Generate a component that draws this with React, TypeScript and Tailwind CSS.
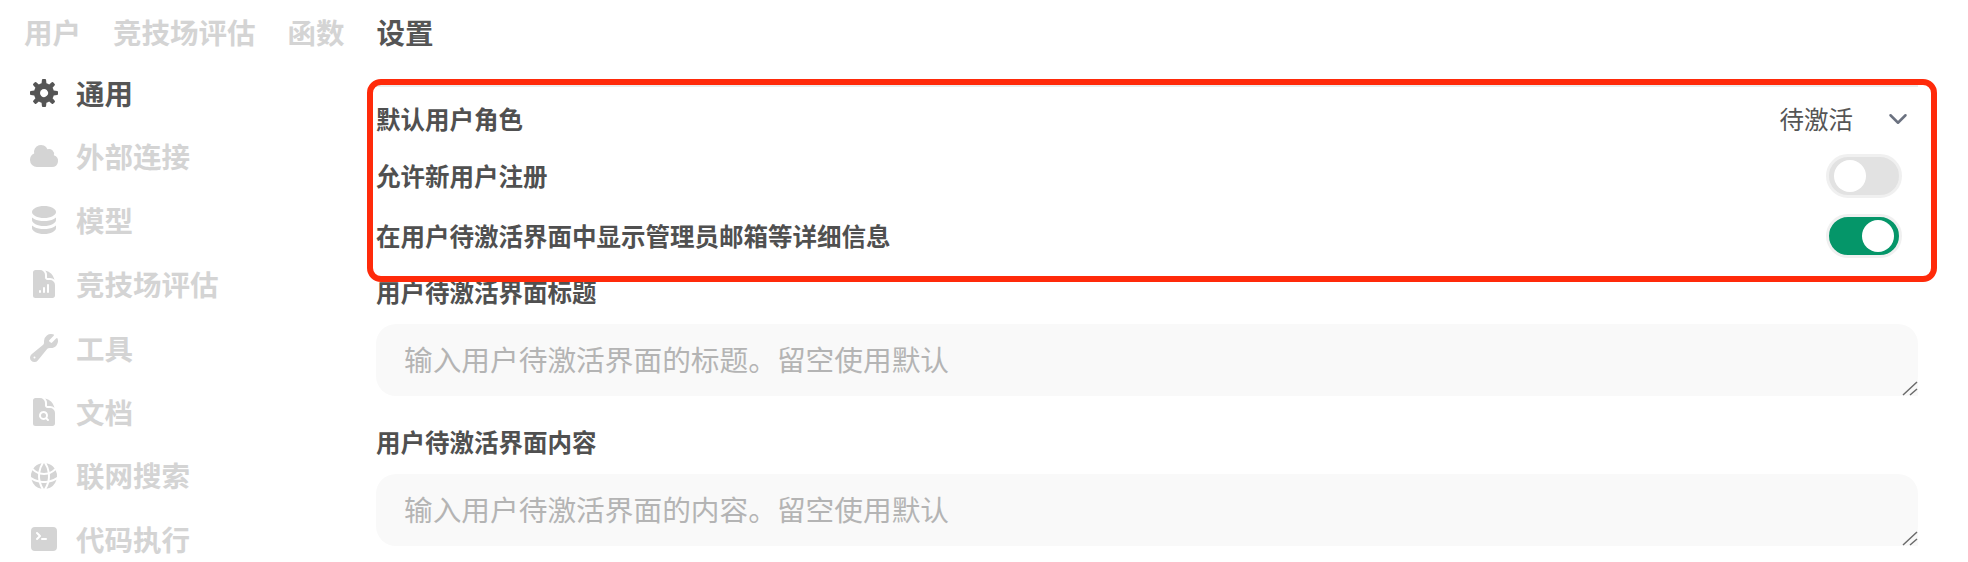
import { ChevronDown } from "lucide-react";
import {
  HiDocumentChartBar,
  HiWrench,
  HiDocumentMagnifyingGlass,
  HiGlobeAlt,
  HiCommandLine,
} from "react-icons/hi2";

const font = { fontFamily: '"Noto Sans CJK SC", "Noto Sans", sans-serif' };

const tabs = ["用户", "竞技场评估", "函数"];

function CogIcon({ className }: { className?: string }) {
  return (
    <svg className={className} viewBox="0 0 16 16" fill="currentColor">
      <path
        fillRule="evenodd"
        clipRule="evenodd"
        d="M6.955 1.45A.5.5 0 0 1 7.452 1h1.096a.5.5 0 0 1 .497.45l.17 1.699c.484.12.94.312 1.356.562l1.321-1.081a.5.5 0 0 1 .67.033l.774.775a.5.5 0 0 1 .034.67l-1.08 1.32c.25.417.44.873.561 1.357l1.699.17a.5.5 0 0 1 .45.497v1.096a.5.5 0 0 1-.45.497l-1.699.17c-.12.484-.312.94-.562 1.356l1.082 1.322a.5.5 0 0 1-.034.67l-.774.774a.5.5 0 0 1-.67.033l-1.322-1.08c-.416.25-.872.44-1.356.561l-.17 1.699a.5.5 0 0 1-.497.45H7.452a.5.5 0 0 1-.497-.45l-.17-1.699a4.973 4.973 0 0 1-1.356-.562L4.108 13.37a.5.5 0 0 1-.67-.033l-.774-.775a.5.5 0 0 1-.034-.67l1.08-1.32a4.971 4.971 0 0 1-.561-1.357l-1.699-.17A.5.5 0 0 1 1 8.548V7.452a.5.5 0 0 1 .45-.497l1.699-.17c.12-.484.312-.94.562-1.356L2.629 4.107a.5.5 0 0 1 .034-.67l.774-.774a.5.5 0 0 1 .67-.033L5.43 3.71a4.97 4.97 0 0 1 1.356-.561l.17-1.699ZM6 8c0 .538.212 1.026.558 1.385l.057.057a2 2 0 0 0 2.828-2.828l-.058-.056A2 2 0 0 0 6 8Z"
      />
    </svg>
  );
}

function CloudIcon({ className }: { className?: string }) {
  return (
    <svg className={className} viewBox="0 0 16 16" fill="currentColor">
      <path d="M1 9.5A3.5 3.5 0 0 0 4.5 13H12a3 3 0 0 0 .917-5.857 2.503 2.503 0 0 0-3.198-3.019 3.5 3.5 0 0 0-6.628 2.171A3.5 3.5 0 0 0 1 9.5Z" />
    </svg>
  );
}

function StackIcon({ className }: { className?: string }) {
  return (
    <svg className={className} viewBox="0 0 16 16" fill="currentColor">
      <path d="M8 7c3.314 0 6-1.343 6-3s-2.686-3-6-3-6 1.343-6 3 2.686 3 6 3Z" />
      <path d="M8 8.5c1.84 0 3.579-.37 4.914-1.037A6.33 6.33 0 0 0 14 6.78V8c0 1.657-2.686 3-6 3S2 9.657 2 8V6.78c.346.273.72.5 1.087.683C4.42 8.131 6.16 8.5 8 8.5Z" />
      <path d="M8 12.5c1.84 0 3.579-.37 4.914-1.037.366-.183.74-.41 1.086-.684V12c0 1.657-2.686 3-6 3s-6-1.343-6-3v-1.22c.346.273.72.5 1.087.683C4.42 12.131 6.16 12.5 8 12.5Z" />
    </svg>
  );
}

const sideItems = [
  { label: "通用", icon: CogIcon, active: true },
  { label: "外部连接", icon: CloudIcon },
  { label: "模型", icon: StackIcon },
  { label: "竞技场评估", icon: HiDocumentChartBar },
  { label: "工具", icon: HiWrench },
  { label: "文档", icon: HiDocumentMagnifyingGlass },
  { label: "联网搜索", icon: HiGlobeAlt },
  { label: "代码执行", icon: HiCommandLine },
];

function Toggle({ on }: { on?: boolean }) {
  return (
    <div
      className={`w-[76px] h-[44px] rounded-full border-[3px] border-[#f0f0f0] flex items-center px-[5px] ${
        on ? "bg-[#059669] justify-end" : "bg-[#e2e2e2] justify-start"
      }`}
    >
      <div className="w-[32px] h-[32px] rounded-full bg-white" />
    </div>
  );
}

function Area({ placeholder }: { placeholder: string }) {
  return (
    <div className="relative">
      <textarea
        className="block w-full h-[72px] rounded-[20px] bg-[#f9f9f9] px-[28px] py-[15px] text-[28.7px] leading-[40px] outline-none resize-y placeholder:text-[#b4b4b4]"
        placeholder={placeholder}
      />
      {/* larger resize grip, the reference is a scaled-up capture */}
      <svg className="absolute right-0 bottom-0 w-[16px] h-[16px] bg-[#f9f9f9]" viewBox="0 0 16 16">
        <path d="M1 15 L15 2 M8 15 L15 9" stroke="#6b6b6b" strokeWidth="1.5" fill="none" />
      </svg>
    </div>
  );
}

export default function App() {
  return (
    <div className="h-[562px] overflow-hidden bg-white" style={font}>
      {/* Top tabs */}
      <div className="flex items-center gap-[32px] pl-[24px] pt-[4px] h-[61px] text-[28.5px] font-semibold text-[#d4d4d4]">
        {tabs.map((t) => (
          <span key={t}>{t}</span>
        ))}
        <span className="text-[#555]">设置</span>
      </div>

      <div className="flex">
        {/* Sidebar */}
        <div className="w-[376px] shrink-0 pl-[28px] flex flex-col">
          {sideItems.map((item) => (
            <div
              key={item.label}
              className={`h-[63.8px] shrink-0 flex items-center gap-[16px] text-[28.5px] font-semibold ${
                item.active ? "text-[#555]" : "text-[#d4d4d4]"
              }`}
            >
              <item.icon className="w-[32px] h-[32px]" />
              <span>{item.label}</span>
            </div>
          ))}
        </div>

        {/* Settings */}
        <div className="w-[1542px] relative">
          <div className="h-[2px] mt-[24px] bg-[#ececec]" />
          <div className="flex items-center justify-between h-[62px] mt-[1px]">
            <span className="text-[24.5px] font-semibold text-[#505050]">默认用户角色</span>
            <div className="flex items-center gap-[30px] pr-[5px] text-[24.5px] text-[#555]">
              <span>待激活</span>
              <ChevronDown className="w-[30px] h-[30px] text-[#6b7280]" strokeWidth={2} />
            </div>
          </div>
          <div className="flex items-center justify-between h-[52px] pr-[16px]">
            <span className="text-[24.5px] font-semibold text-[#505050]">允许新用户注册</span>
            <Toggle />
          </div>
          <div className="flex items-center justify-between h-[68px] pr-[16px]">
            <span className="text-[24.5px] font-semibold text-[#505050]">在用户待激活界面中显示管理员邮箱等详细信息</span>
            <Toggle on />
          </div>

          <div className="mt-[2px] mb-[12px] text-[24.5px] font-semibold text-[#505050] leading-[40px]">用户待激活界面标题</div>
          <Area placeholder="输入用户待激活界面的标题。留空使用默认" />
          <div className="mt-[26px] mb-[12px] text-[24.5px] font-semibold text-[#505050] leading-[40px]">用户待激活界面内容</div>
          <Area placeholder="输入用户待激活界面的内容。留空使用默认" />

          {/* Red annotation frame */}
          <div className="absolute left-[-9px] top-[18px] w-[1570px] h-[203px] border-[6px] border-[#ff2a0a] rounded-[14px] pointer-events-none" />
        </div>
      </div>
    </div>
  );
}
